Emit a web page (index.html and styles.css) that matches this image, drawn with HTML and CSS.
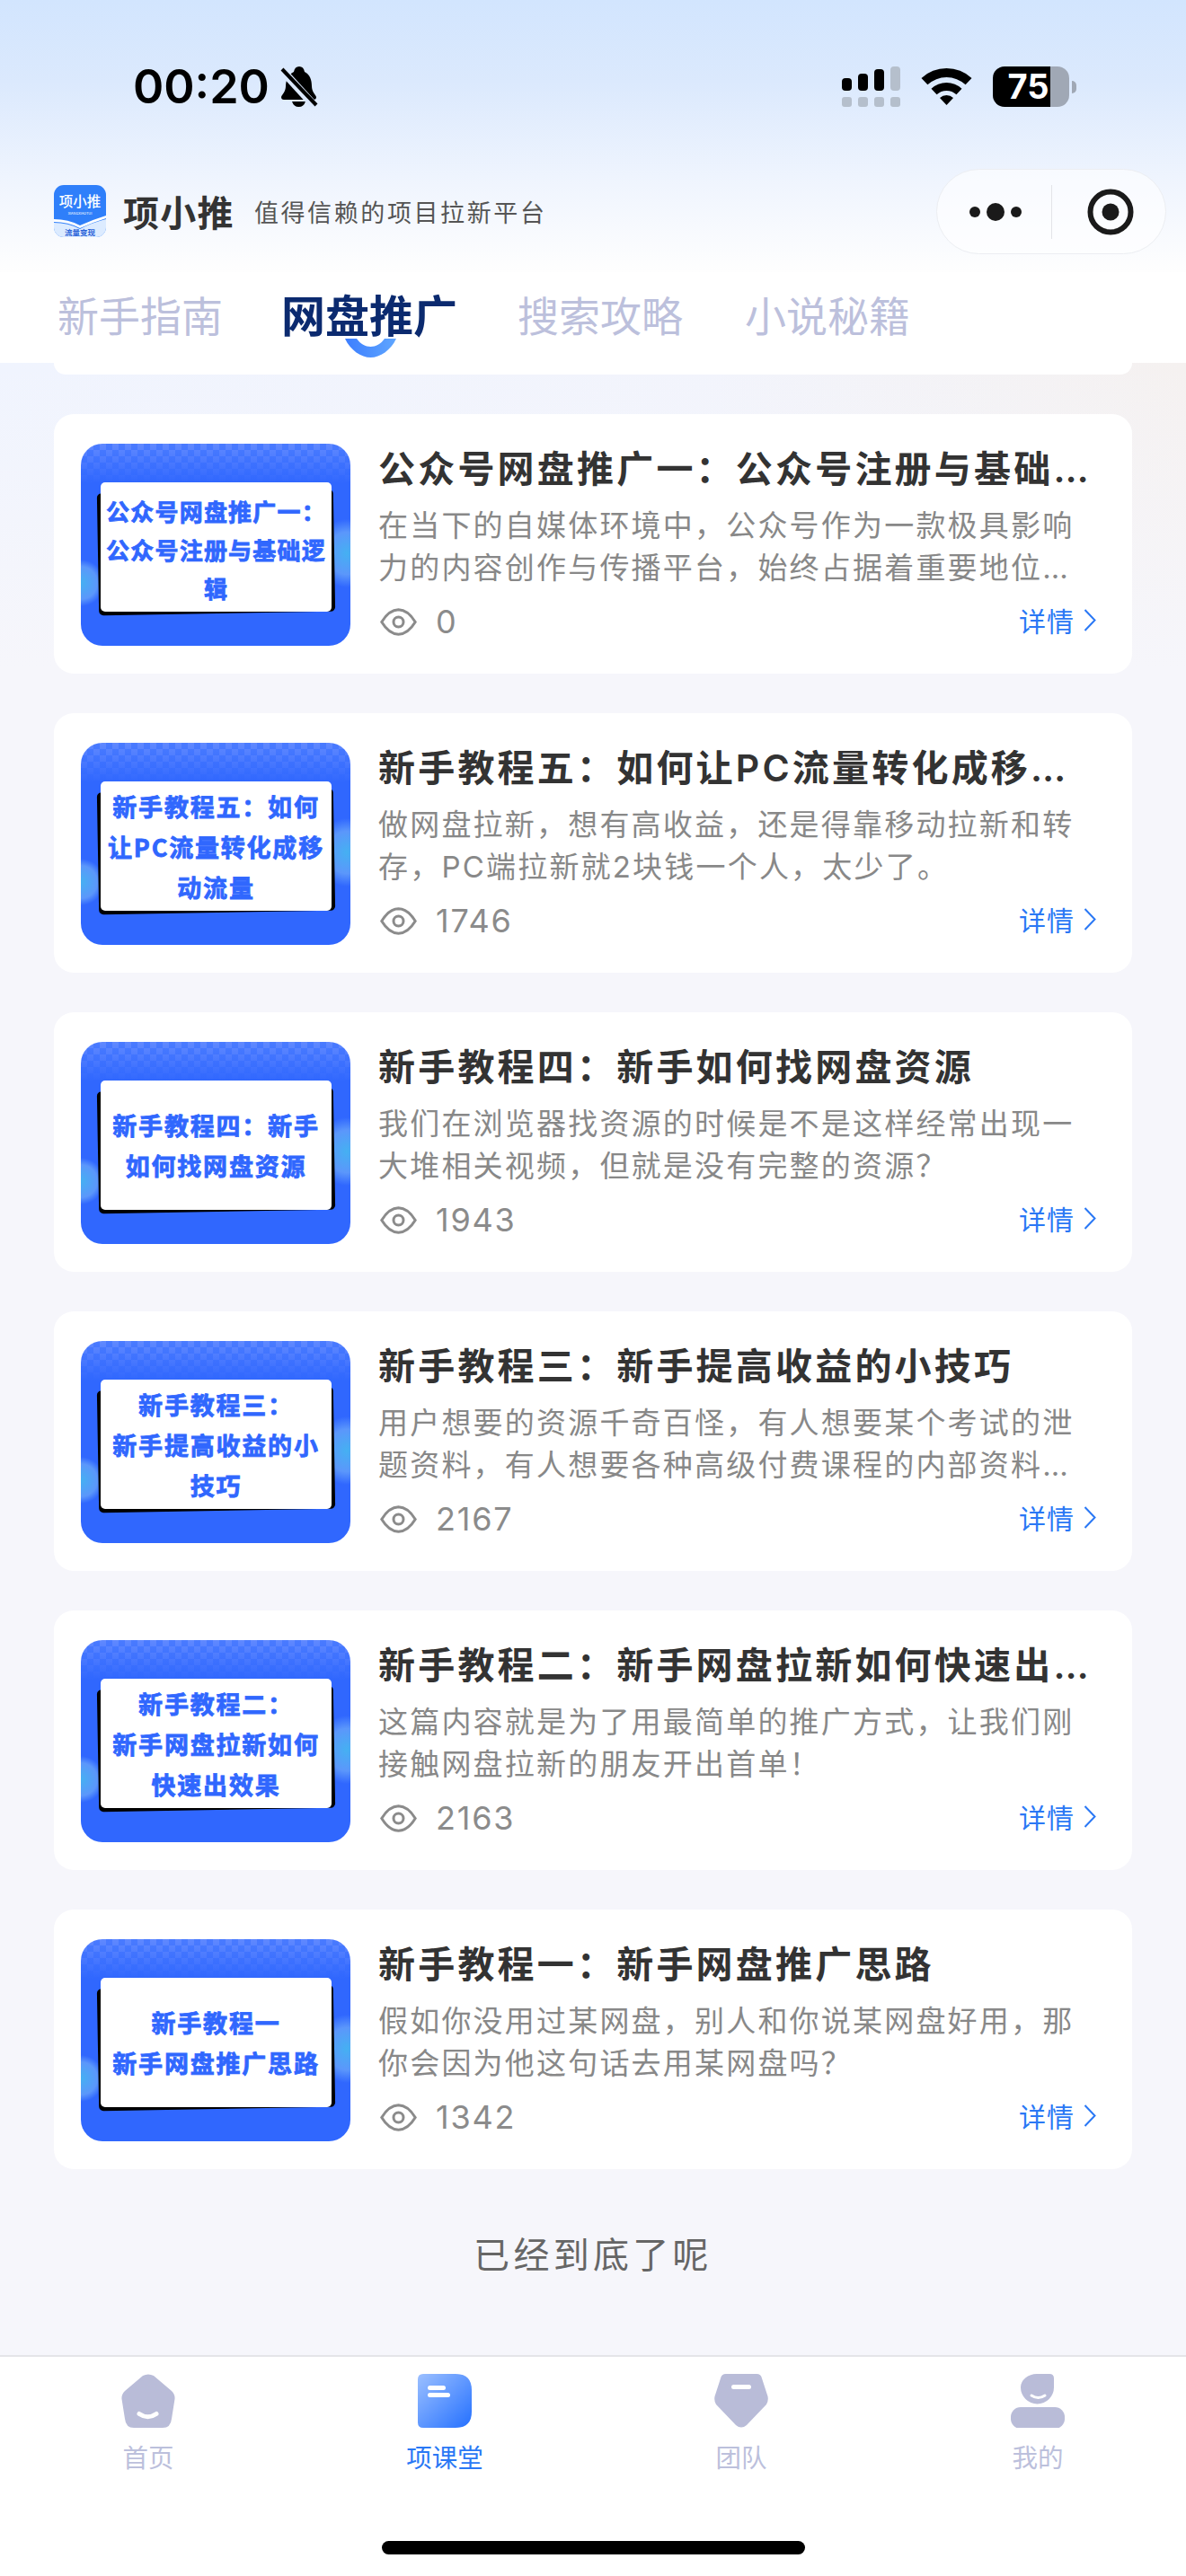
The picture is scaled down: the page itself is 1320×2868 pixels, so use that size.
FILE: index.html
```html
<!DOCTYPE html>
<html lang="zh-CN">
<head>
    <meta charset="utf-8">
    <title>项小推</title>
    <link rel="stylesheet" href="styles.css">
</head>
<body>
<div class="page">
    <div class="top">
        <div class="status-bar">
            <div class="status-left">
                <span class="time">00:20</span>
                <svg class="bell" viewBox="0 0 42 45">
                    <path d="M21 0Q26 0 27 6C33 9 35 15 35 22C35 28 39 31 40 34Q40 37 37 37H4Q1 37 1 34C2 31 6 28 6 22C6 15 9 9 15 6Q16 0 21 0Z"/>
                    <path d="M13 39H28Q26 45 20.500 45Q15 45 13 39Z"/>
                    <path class="bell-gap" d="M-2 0L39 45"/>
                    <path class="bell-slash" d="M2 3L40 43"/>
                </svg>
            </div>
            <div class="status-right">
                <div class="signal">
                    <i class="bar bar-1"></i><i class="bar bar-2"></i><i class="bar bar-3"></i><i class="bar bar-4"></i>
                    <i class="dot"></i><i class="dot"></i><i class="dot"></i><i class="dot"></i>
                </div>
                <svg class="wifi" viewBox="0 0 57 42">
                    <path d="M0.500 12A41 41 0 0 1 56.500 12L49.600 19.300A31 31 0 0 0 7.400 19.300Z"/>
                    <path d="M11.500 23.700A25 25 0 0 1 45.500 23.700L39.400 30.300A16 16 0 0 0 17.600 30.300Z"/>
                    <path d="M21 34A11 11 0 0 1 36 34L28.500 42Z"/>
                </svg>
                <div class="battery">
                    <div class="battery-body"><span class="battery-num">75</span></div>
                    <div class="battery-nub"></div>
                </div>
            </div>
        </div>
        <div class="nav">
            <div class="brand">
                <svg class="logo" viewBox="0 0 58 58">
                    <defs>
                        <clipPath id="logoClip"><rect width="58" height="58" rx="11"/></clipPath>
                    </defs>
                    <g clip-path="url(#logoClip)">
                        <rect width="58" height="58" fill="#2f7ffa"/>
                        <path d="M0 42Q16 42 29 49Q42 42 58 38V58H0Z" fill="#dcebff"/>
                        <path d="M0 38Q16 38 29 45Q42 39 58 34V37Q42 42 29 48Q16 41 0 41Z" fill="#fff"/>
                    </g>
                    <text class="logo-name" x="29" y="24">项小推</text>
                    <text class="logo-en" x="29" y="33">XIANGXIAOTUI</text>
                    <text class="logo-sub" x="29" y="56">流量变现</text>
                </svg>
                <span class="brand-name">项小推</span>
                <span class="brand-slogan">值得信赖的项目拉新平台</span>
            </div>
            <div class="capsule">
                <div class="capsule-more"><i></i><i class="big"></i><i></i></div>
                <div class="capsule-line"></div>
                <svg class="capsule-close" viewBox="0 0 52 52">
                    <circle cx="26" cy="26" r="22.500" fill="none" stroke="#1a1a1a" stroke-width="6"/>
                    <circle cx="26" cy="26" r="9.500" fill="#1a1a1a"/>
                </svg>
            </div>
        </div>
    </div>

    <div class="tabs">
        <span class="tab">新手指南</span>
        <span class="tab tab-active">网盘推广
            <svg class="tab-smile" viewBox="0 0 57 21">
                <defs>
                    <linearGradient id="smileFill" x1="0" y1="0" x2="1" y2="0">
                        <stop offset="0" stop-color="#3c7eff"/>
                        <stop offset="1" stop-color="#5fa6ff"/>
                    </linearGradient>
                </defs>
                <path fill="url(#smileFill)" d="M0 0C6 13 18 21 28.500 21C39 21 51 13 57 0H44C40 6 34 9 28.500 9C23 9 17 6 13 0Z"/>
            </svg>
        </span>
        <span class="tab">搜索攻略</span>
        <span class="tab">小说秘籍</span>
    </div>

    <div class="main">
        <div class="card-tail"></div>

        <div class="card">
            <div class="thumb"><div class="thumb-panel thumb-panel-small">公众号网盘推广一：<br>公众号注册与基础逻<br>辑</div></div>
            <div class="info">
                <div class="title">公众号网盘推广一：公众号注册与基础逻辑</div>
                <div class="desc">在当下的自媒体环境中，公众号作为一款极具影响力的内容创作与传播平台，始终占据着重要地位，吸引着无数创作者加入其中。</div>
                <div class="meta">
                    <div class="views">
                        <svg class="eye" viewBox="0 0 41 31"><path d="M1.800 15.500Q10 2 20.500 1.800Q31 2 39.200 15.500Q31 29 20.500 29.200Q10 29 1.800 15.500Z"/><circle cx="20.500" cy="15.500" r="5.500"/></svg>
                        <span class="count">0</span>
                    </div>
                    <div class="more">详情<svg class="chevron" viewBox="0 0 14 25"><path d="M1.500 1L12.500 12.500L1.500 24"/></svg></div>
                </div>
            </div>
        </div>

        <div class="card">
            <div class="thumb"><div class="thumb-panel">新手教程五：如何<br>让PC流量转化成移<br>动流量</div></div>
            <div class="info">
                <div class="title">新手教程五：如何让PC流量转化成移动流量</div>
                <div class="desc">做网盘拉新，想有高收益，还是得靠移动拉新和转存，PC端拉新就2块钱一个人，太少了。</div>
                <div class="meta">
                    <div class="views">
                        <svg class="eye" viewBox="0 0 41 31"><path d="M1.800 15.500Q10 2 20.500 1.800Q31 2 39.200 15.500Q31 29 20.500 29.200Q10 29 1.800 15.500Z"/><circle cx="20.500" cy="15.500" r="5.500"/></svg>
                        <span class="count">1746</span>
                    </div>
                    <div class="more">详情<svg class="chevron" viewBox="0 0 14 25"><path d="M1.500 1L12.500 12.500L1.500 24"/></svg></div>
                </div>
            </div>
        </div>

        <div class="card">
            <div class="thumb"><div class="thumb-panel">新手教程四：新手<br>如何找网盘资源</div></div>
            <div class="info">
                <div class="title">新手教程四：新手如何找网盘资源</div>
                <div class="desc">我们在浏览器找资源的时候是不是这样经常出现一大堆相关视频，但就是没有完整的资源？</div>
                <div class="meta">
                    <div class="views">
                        <svg class="eye" viewBox="0 0 41 31"><path d="M1.800 15.500Q10 2 20.500 1.800Q31 2 39.200 15.500Q31 29 20.500 29.200Q10 29 1.800 15.500Z"/><circle cx="20.500" cy="15.500" r="5.500"/></svg>
                        <span class="count">1943</span>
                    </div>
                    <div class="more">详情<svg class="chevron" viewBox="0 0 14 25"><path d="M1.500 1L12.500 12.500L1.500 24"/></svg></div>
                </div>
            </div>
        </div>

        <div class="card">
            <div class="thumb"><div class="thumb-panel">新手教程三：<br>新手提高收益的小<br>技巧</div></div>
            <div class="info">
                <div class="title">新手教程三：新手提高收益的小技巧</div>
                <div class="desc">用户想要的资源千奇百怪，有人想要某个考试的泄题资料，有人想要各种高级付费课程的内部资料，还有人想要各类软件。</div>
                <div class="meta">
                    <div class="views">
                        <svg class="eye" viewBox="0 0 41 31"><path d="M1.800 15.500Q10 2 20.500 1.800Q31 2 39.200 15.500Q31 29 20.500 29.200Q10 29 1.800 15.500Z"/><circle cx="20.500" cy="15.500" r="5.500"/></svg>
                        <span class="count">2167</span>
                    </div>
                    <div class="more">详情<svg class="chevron" viewBox="0 0 14 25"><path d="M1.500 1L12.500 12.500L1.500 24"/></svg></div>
                </div>
            </div>
        </div>

        <div class="card">
            <div class="thumb"><div class="thumb-panel">新手教程二：<br>新手网盘拉新如何<br>快速出效果</div></div>
            <div class="info">
                <div class="title">新手教程二：新手网盘拉新如何快速出效果</div>
                <div class="desc">这篇内容就是为了用最简单的推广方式，让我们刚接触网盘拉新的朋友开出首单！</div>
                <div class="meta">
                    <div class="views">
                        <svg class="eye" viewBox="0 0 41 31"><path d="M1.800 15.500Q10 2 20.500 1.800Q31 2 39.200 15.500Q31 29 20.500 29.200Q10 29 1.800 15.500Z"/><circle cx="20.500" cy="15.500" r="5.500"/></svg>
                        <span class="count">2163</span>
                    </div>
                    <div class="more">详情<svg class="chevron" viewBox="0 0 14 25"><path d="M1.500 1L12.500 12.500L1.500 24"/></svg></div>
                </div>
            </div>
        </div>

        <div class="card">
            <div class="thumb"><div class="thumb-panel">新手教程一<br>新手网盘推广思路</div></div>
            <div class="info">
                <div class="title">新手教程一：新手网盘推广思路</div>
                <div class="desc">假如你没用过某网盘，别人和你说某网盘好用，那你会因为他这句话去用某网盘吗？</div>
                <div class="meta">
                    <div class="views">
                        <svg class="eye" viewBox="0 0 41 31"><path d="M1.800 15.500Q10 2 20.500 1.800Q31 2 39.200 15.500Q31 29 20.500 29.200Q10 29 1.800 15.500Z"/><circle cx="20.500" cy="15.500" r="5.500"/></svg>
                        <span class="count">1342</span>
                    </div>
                    <div class="more">详情<svg class="chevron" viewBox="0 0 14 25"><path d="M1.500 1L12.500 12.500L1.500 24"/></svg></div>
                </div>
            </div>
        </div>

        <div class="list-end">已经到底了呢</div>
    </div>

    <div class="tabbar">
        <div class="tabbar-items">
            <div class="tabbar-item">
                <svg class="tabbar-icon" viewBox="0 0 60 60">
                    <path class="icon-fill" d="M24 2Q30 -1 36 2L56 19Q60 23 59.500 28L56 50Q55 60 46 60H14Q5 60 4 50L0.500 28Q0 23 4 19Z"/>
                    <path class="icon-cut" d="M20 44.500Q29.500 51 39 44.500"/>
                </svg>
                <span>首页</span>
            </div>
            <div class="tabbar-item tabbar-item-active">
                <svg class="tabbar-icon" viewBox="0 0 60 60">
                    <defs>
                        <linearGradient id="bookFill" x1="0" y1="0" x2="1" y2="1">
                            <stop offset="0" stop-color="#9cc0ff"/>
                            <stop offset="1" stop-color="#2470ff"/>
                        </linearGradient>
                    </defs>
                    <path fill="url(#bookFill)" d="M6 0H42Q60 0 60 18V42Q60 60 42 60H6Q0 60 0 54V6Q0 0 6 0Z"/>
                    <rect x="11" y="13" width="20" height="5" rx="2.500" fill="#fff"/>
                    <rect x="11" y="21" width="25" height="5" rx="2.500" fill="#fff"/>
                </svg>
                <span>项课堂</span>
            </div>
            <div class="tabbar-item">
                <svg class="tabbar-icon" viewBox="0 0 60 60">
                    <path class="icon-fill" d="M13 0H47Q52 0 53 5L59.500 25Q60.500 30 58 34L36 57Q30 62 24 57L2 34Q-0.500 30 0.500 25L7 5Q8 0 13 0Z"/>
                    <rect x="19" y="12" width="22" height="5" rx="2.500" fill="#fff"/>
                </svg>
                <span>团队</span>
            </div>
            <div class="tabbar-item">
                <svg class="tabbar-icon" viewBox="0 0 60 60">
                    <path class="icon-fill" d="M29 0H43Q48 0 48 5V15A18.500 18.500 0 0 1 11 15A18.500 15 0 0 1 29 0Z"/>
                    <rect class="icon-fill" x="0" y="37" width="60" height="24" rx="11"/>
                    <path class="icon-cut icon-cut-thin" d="M23 24Q30.500 29 38 24"/>
                </svg>
                <span>我的</span>
            </div>
        </div>
        <div class="home-indicator"></div>
    </div>
</div>
</body>
</html>
```

FILE: styles.css
```css
* {
    margin: 0;
    padding: 0;
    box-sizing: border-box;
}

body {
    font-family: 'Inter', 'Noto Sans CJK SC', sans-serif;
    background: #f6f6fb;
}

.page {
    width: 1320px;
    height: 2868px;
    display: flex;
    flex-direction: column;
    overflow: hidden;
}

/* Status bar and title row share one gradient */
.top {
    height: 303px;
    background: linear-gradient(180deg, #d2e5fe 0%, #dbe9fd 30%, #f0f5fe 68%, #fefefe 100%);
}

.status-bar {
    height: 188px;
    padding: 74px 122px 0 148px;
    display: flex;
    justify-content: space-between;
    align-items: flex-start;
}

.status-left {
    display: flex;
    align-items: center;
    gap: 12px;
    height: 45px;
}

.time {
    font-size: 52px;
    font-weight: 600;
    line-height: 45px;
    color: #000;
}

.bell {
    width: 42px;
    height: 45px;
    fill: #000;
}

.bell-gap {
    fill: none;
    stroke: #dbe8fd;
    stroke-width: 9;
}

.bell-slash {
    fill: none;
    stroke: #000;
    stroke-width: 4;
}

.status-right {
    display: flex;
    align-items: flex-start;
    gap: 23px;
}

.signal {
    width: 65px;
    height: 45px;
    display: grid;
    grid-template-columns: repeat(4, 11px);
    grid-template-rows: 27px 11px;
    column-gap: 7px;
    row-gap: 7px;
    align-items: end;
}

.bar {
    display: block;
    width: 11px;
    background: #000;
    border-radius: 4px;
}

.bar-1 { height: 14px; }
.bar-2 { height: 19px; }
.bar-3 { height: 24px; }
.bar-4 { height: 27px; background: #b5bfcc; }

.dot {
    display: block;
    width: 11px;
    height: 11px;
    background: #b5bfcc;
    border-radius: 3px;
}

.wifi {
    width: 57px;
    height: 42px;
    fill: #000;
    margin-top: 1px;
}

.battery {
    display: flex;
    align-items: center;
    height: 45px;
}

.battery-body {
    width: 85px;
    height: 45px;
    border-radius: 13px;
    background: linear-gradient(90deg, #000 75%, #a0a8b5 75%);
    display: flex;
    justify-content: center;
    align-items: center;
}

.battery-num {
    font-size: 38px;
    font-weight: 700;
    line-height: 45px;
    color: #fff;
    padding-right: 6px;
}

.battery-nub {
    width: 5px;
    height: 14px;
    margin-left: 3px;
    background: #a0a8b5;
    border-radius: 0 5px 5px 0;
}

.nav {
    height: 115px;
    padding: 0 22px 0 60px;
    display: flex;
    justify-content: space-between;
    align-items: flex-start;
}

.brand {
    display: flex;
    align-items: center;
    height: 94px;
}

.logo {
    width: 58px;
    height: 58px;
    margin: 0 19px 0 0;
}

.logo text {
    text-anchor: middle;
    font-family: 'Noto Sans CJK SC', sans-serif;
}

.logo-name {
    font-size: 15.500px;
    font-weight: 500;
    fill: #fff;
}

.logo-en {
    font-size: 4px;
    fill: #fff;
}

.logo-sub {
    font-size: 8.500px;
    font-weight: 700;
    fill: #2a62d8;
}

.brand-name {
    font-family: 'Noto Sans CJK SC', sans-serif;
    font-size: 40px;
    font-weight: 700;
    color: #333;
    margin-right: 22px;
    letter-spacing: 1.300px;
}

.brand-slogan {
    font-family: 'Noto Sans CJK SC', sans-serif;
    font-size: 27px;
    color: #555;
    letter-spacing: 2.600px;
}

.capsule {
    width: 256px;
    height: 95px;
    border: 1.500px solid #eceef2;
    border-radius: 48px;
    background: rgba(255, 255, 255, 0.6);
    display: flex;
    align-items: center;
}

.capsule-more {
    width: 127px;
    display: flex;
    justify-content: center;
    align-items: center;
    gap: 7px;
    padding-left: 2px;
}

.capsule-more i {
    display: block;
    width: 12px;
    height: 12px;
    border-radius: 50%;
    background: #1a1a1a;
}

.capsule-more .big {
    width: 20px;
    height: 20px;
}

.capsule-line {
    width: 1px;
    height: 60px;
    background: #e3e4e8;
}

.capsule-close {
    width: 52px;
    height: 52px;
    margin-left: 39px;
}

.tabs {
    height: 101px;
    background: #fff;
    padding: 0 0 0 64px;
    display: flex;
    align-items: flex-start;
    gap: 69px;
}

.tab {
    position: relative;
    font-family: 'Noto Sans CJK SC', sans-serif;
    font-size: 46px;
    line-height: 56px;
    padding-top: 18px;
    color: #bcc0dc;
    white-space: nowrap;
}

.tab-active {
    margin: 0 -2px 0 -4px;
    font-size: 49px;
    font-weight: 700;
    color: #0b2a6f;
}

.tab-smile {
    position: absolute;
    left: 71px;
    top: 74px;
    width: 57px;
    height: 21px;
}

.main {
    flex: 1;
    padding: 0 60px;
    background:
        linear-gradient(180deg, rgba(246, 246, 251, 0) 0, #f6f6fb 340px),
        linear-gradient(90deg, #f0f4fe 0%, #f2f4fc 60%, #f5f1f0 100%);
}

.card-tail {
    height: 13px;
    margin-bottom: 44px;
    background: #fff;
    border-radius: 0 0 22px 22px;
}

.card {
    height: 289px;
    margin-bottom: 44px;
    padding: 33px 33px 31px 30px;
    background: #fff;
    border-radius: 22px;
    display: flex;
    gap: 31px;
}

.thumb {
    position: relative;
    isolation: isolate;
    flex: none;
    width: 300px;
    height: 225px;
    border-radius: 24px;
    overflow: hidden;
    background:
        linear-gradient(180deg, rgba(48, 103, 254, 0) 0, #3067fe 44px),
        repeating-conic-gradient(#6089ff 0 25%, #4a7bff 0 50%) 0 0 / 14px 14px,
        #3067fe;
}

/* Two soft blobs on the sides of the cover */
.thumb::before {
    content: "";
    position: absolute;
    inset: 0;
    background:
        radial-gradient(ellipse 34px 38px at 296px 122px, #45b0f2 0, #5b97fb 62%, rgba(91, 151, 251, 0) 100%),
        radial-gradient(ellipse 26px 26px at 0 155px, #45b0f2 0, #5b97fb 70%, rgba(91, 151, 251, 0) 100%);
}

.thumb::after {
    content: "";
    position: absolute;
    left: 19px;
    top: 53px;
    width: 263px;
    height: 136px;
    border-radius: 5px;
    background: #000;
    transform: rotate(-1deg);
}

.thumb-panel {
    position: absolute;
    z-index: 1;
    left: 22px;
    top: 43px;
    width: 257px;
    height: 144px;
    background: #fff;
    border-radius: 5px;
    display: flex;
    align-items: center;
    justify-content: center;
    text-align: center;
    font-family: 'Noto Sans CJK SC', sans-serif;
    font-size: 27px;
    font-weight: 700;
    line-height: 45px;
    letter-spacing: 1.800px;
    color: #3067fe;
    -webkit-text-stroke: 0.800px #3067fe;
    white-space: nowrap;
}

/* Cover whose title has nine characters to a line */
.thumb-panel-small {
    padding-top: 5px;
    font-size: 26px;
    line-height: 43px;
    letter-spacing: 1.200px;
}

.info {
    flex: 1;
    min-width: 0;
}

.title {
    max-width: 804px;
    font-size: 41px;
    font-weight: 600;
    line-height: 56px;
    letter-spacing: 3.200px;
    color: #333;
    white-space: nowrap;
    overflow: hidden;
    text-overflow: ellipsis;
}

.desc {
    max-width: 790px;
    height: 94px;
    margin-top: 12px;
    font-size: 33px;
    line-height: 47px;
    letter-spacing: 2.200px;
    color: #888;
    display: -webkit-box;
    -webkit-box-orient: vertical;
    -webkit-line-clamp: 2;
    overflow: hidden;
}

.meta {
    height: 44px;
    margin-top: 14px;
    display: flex;
    justify-content: space-between;
    align-items: center;
}

.views {
    display: flex;
    align-items: center;
    gap: 21px;
    padding-left: 2px;
}

.eye {
    width: 41px;
    height: 31px;
    fill: none;
    stroke: #8b8b8b;
    stroke-width: 3;
}

.count {
    font-size: 36px;
    line-height: 44px;
    letter-spacing: 1.800px;
    color: #8b8b8b;
}

.more {
    display: flex;
    align-items: center;
    gap: 10px;
    font-size: 30px;
    line-height: 44px;
    letter-spacing: 1px;
    color: #2a78f5;
}

.chevron {
    width: 14px;
    height: 25px;
    margin: -4px 7px 0 0;
    fill: none;
    stroke: #2a78f5;
    stroke-width: 2;
}

.list-end {
    margin-top: 66px;
    text-align: center;
    font-size: 40px;
    line-height: 60px;
    letter-spacing: 4.300px;
    color: #666;
}

.tabbar {
    height: 246px;
    flex: none;
    background: #fff;
    border-top: 2px solid #e5e5e8;
    display: flex;
    flex-direction: column;
    align-items: center;
}

.tabbar-items {
    width: 100%;
    height: 205px;
    padding-top: 19px;
    display: grid;
    grid-template-columns: repeat(4, 330px);
}

.tabbar-item {
    display: flex;
    flex-direction: column;
    align-items: center;
    gap: 12px;
    font-family: 'Noto Sans CJK SC', sans-serif;
    font-size: 28.500px;
    line-height: 40px;
    color: #bcc0dc;
}

.tabbar-item-active {
    color: #2a78f5;
}

.tabbar-icon {
    width: 60px;
    height: 60px;
}

.icon-fill {
    fill: #b9bcd8;
}

.icon-cut {
    fill: none;
    stroke: #fff;
    stroke-width: 5;
    stroke-linecap: round;
}

.icon-cut-thin {
    stroke-width: 3;
}

.home-indicator {
    width: 471px;
    height: 15px;
    border-radius: 8px;
    background: #000;
}
```
